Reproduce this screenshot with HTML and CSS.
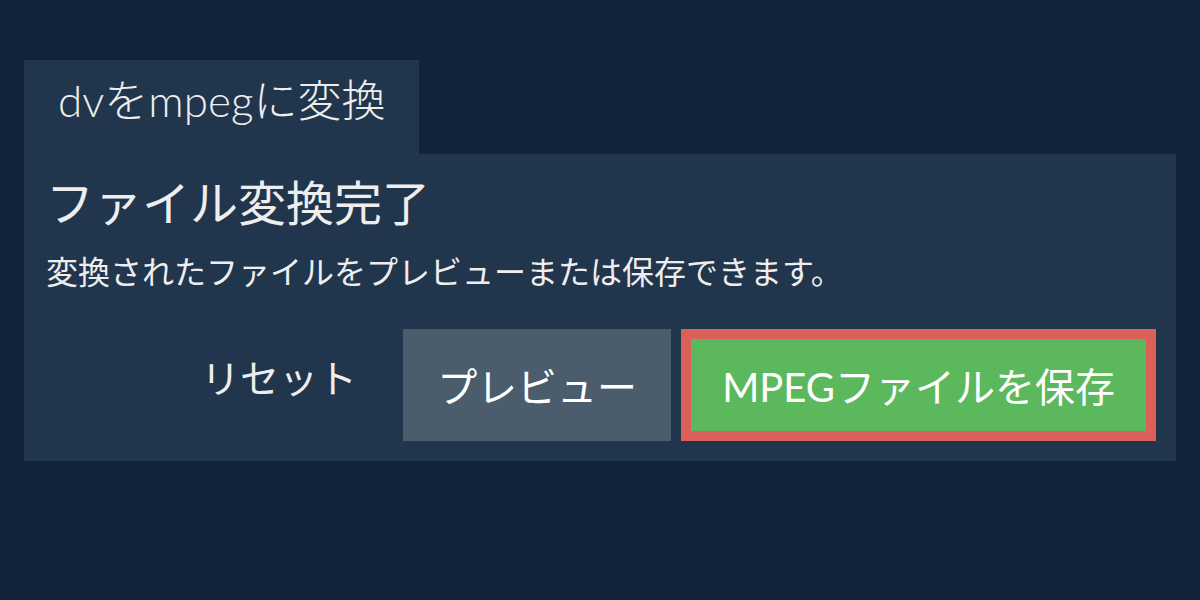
FILE: index.html
```html
<!DOCTYPE html>
<html lang="ja">
<head>
<meta charset="utf-8">
<link rel="stylesheet" href="styles.css">
</head>
<body>
<div class="page">
  <div class="tab">dvをmpegに変換</div>
  <div class="panel">
    <h2 class="title">ファイル変換完了</h2>
    <p class="subtitle">変換されたファイルをプレビューまたは保存できます。</p>
    <div class="actions">
      <button class="btn btn-reset">リセット</button>
      <button class="btn btn-preview">プレビュー</button>
      <button class="btn btn-save">MPEGファイルを保存</button>
    </div>
  </div>
</div>
</body>
</html>
```

FILE: styles.css
```css
html, body {
  margin: 0;
  padding: 0;
  background: #11233a;
}
body {
  font-family: Lato, "Noto Sans CJK JP", sans-serif;
  color: #eeeeee;
}
.page {
  padding: 60px 24px;
  display: flex;
  flex-direction: column;
  align-items: flex-start;
}
.tab {
  background: #21354d;
  height: 94px;
  box-sizing: border-box;
  padding: 0 34px 18px;
  display: flex;
  align-items: center;
  white-space: nowrap;
  font-size: 44px;
  font-weight: 300;
}
.panel {
  align-self: stretch;
  background: #21354d;
  padding: 21px 20px 20px 22px;
}
.title {
  margin: 0;
  font-size: 48px;
  font-weight: 400;
  line-height: 56px;
}
.subtitle {
  margin: 22px 0 0;
  font-size: 32px;
  line-height: 38px;
}
.actions {
  margin-top: 38px;
  display: flex;
  justify-content: flex-end;
  gap: 10px;
}
.btn {
  font-family: Lato, "Noto Sans CJK JP", sans-serif;
  font-size: 40px;
  height: 112px;
  border: none;
  color: #ffffff;
  display: flex;
  align-items: center;
  justify-content: center;
  box-sizing: border-box;
  white-space: nowrap;
  cursor: pointer;
}
.btn-reset {
  background: transparent;
  color: #eeeeee;
  font-size: 39px;
  padding: 0 36px 18px;
}
.btn-preview {
  background: #4b5c6d;
  padding: 0 34px;
}
.btn-save {
  background: #5cb85c;
  border: 10px solid #db605a;
  padding: 0 31px;
}
```
